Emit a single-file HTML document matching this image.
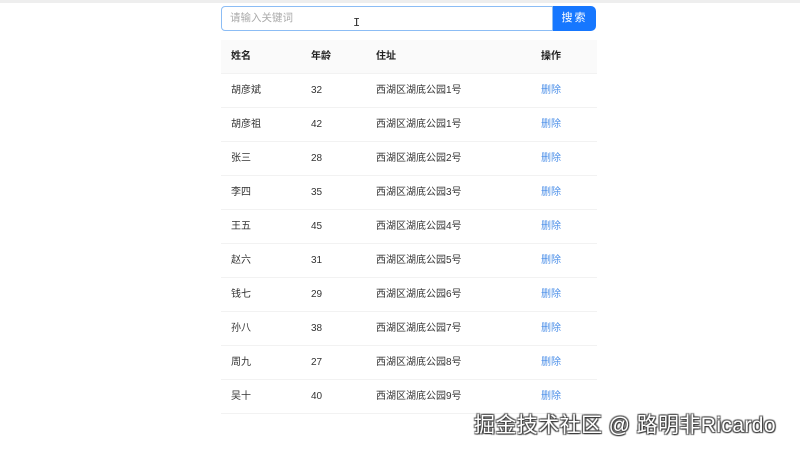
<!DOCTYPE html>
<html><head><meta charset="utf-8"><style>
body{margin:0;width:800px;height:450px;background:#fff;position:relative;overflow:hidden;font-family:"Liberation Sans","Noto Sans CJK SC",sans-serif;font-size:10px;color:#333}
.top{position:absolute;left:0;top:0;width:800px;height:3px;background:#eee}
.inp{position:absolute;left:221px;top:6px;width:332px;height:25px;border:1px solid #8cbdf5;border-radius:4px 0 0 4px;box-sizing:border-box;color:#aaa;font-size:10.5px;line-height:23px;padding-left:8px}
.btn{position:absolute;left:553px;top:6px;width:43px;height:25px;background:#1677ff;border-radius:0 5px 5px 0;color:#fff;font-size:11px;line-height:25px;text-align:center;letter-spacing:2px}
.cur{position:absolute;left:353px;top:16px;font-size:12px;color:#333;font-family:"Liberation Mono",monospace}
table{position:absolute;left:221px;top:40px;width:376px;border-collapse:collapse;table-layout:fixed}
td,th{height:33px;padding:0;text-align:left;font-weight:normal;border-bottom:1px solid #f2f2f2;vertical-align:middle;line-height:14px}
th{background:#fafafa;font-weight:bold;color:#222}
.c1{width:90px}.c2{width:65px}.c3{width:165px}
td:first-child,th:first-child{padding-left:10px}
a{color:#4a8ee8;text-decoration:none}
.wm{position:absolute;left:474px;top:409px;font-size:21px;color:#fff;text-shadow:1px 1px 1px #333,-1px -1px 1px #555,1px -1px 1px #555,-1px 1px 1px #555;letter-spacing:.4px}
</style></head><body>
<div class="top"></div>
<div class="inp">请输入关键词</div>
<div class="btn">搜索</div>
<div class="cur">I</div>
<table>
<colgroup><col class="c1"><col class="c2"><col class="c3"><col></colgroup>
<tr><th>姓名</th><th>年龄</th><th>住址</th><th>操作</th></tr>
<tr><td>胡彦斌</td><td>32</td><td>西湖区湖底公园1号</td><td><a>删除</a></td></tr>
<tr><td>胡彦祖</td><td>42</td><td>西湖区湖底公园1号</td><td><a>删除</a></td></tr>
<tr><td>张三</td><td>28</td><td>西湖区湖底公园2号</td><td><a>删除</a></td></tr>
<tr><td>李四</td><td>35</td><td>西湖区湖底公园3号</td><td><a>删除</a></td></tr>
<tr><td>王五</td><td>45</td><td>西湖区湖底公园4号</td><td><a>删除</a></td></tr>
<tr><td>赵六</td><td>31</td><td>西湖区湖底公园5号</td><td><a>删除</a></td></tr>
<tr><td>钱七</td><td>29</td><td>西湖区湖底公园6号</td><td><a>删除</a></td></tr>
<tr><td>孙八</td><td>38</td><td>西湖区湖底公园7号</td><td><a>删除</a></td></tr>
<tr><td>周九</td><td>27</td><td>西湖区湖底公园8号</td><td><a>删除</a></td></tr>
<tr><td>吴十</td><td>40</td><td>西湖区湖底公园9号</td><td><a>删除</a></td></tr>
</table>
<div class="wm">掘金技术社区 @ 路明非Ricardo</div>
</body></html>
